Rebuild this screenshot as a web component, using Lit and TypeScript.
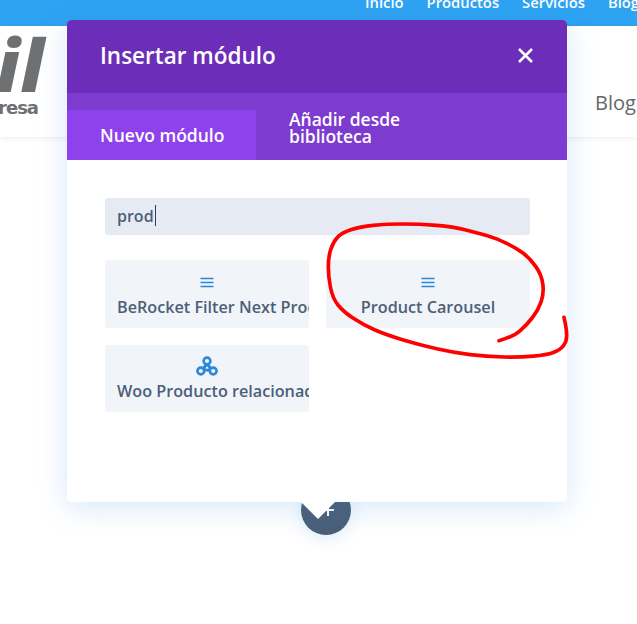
import { LitElement, css, html, svg } from "lit";
import { customElement } from "lit/decorators.js";

const FONT = css`"Open Sans", "Noto Sans", sans-serif`;

// hand drawn circle, in 3x crop coordinates
const SCRIBBLE = [
  [537, 392], [580, 380], [620, 345], [655, 300], [672, 250], [665, 195], [630, 145], [590, 115],
  [530, 85], [470, 68], [400, 50], [300, 42], [200, 42], [120, 50], [65, 68], [40, 95], [25, 140],
  [25, 200], [38, 265], [70, 305], [130, 345], [200, 375], [300, 405], [400, 428], [500, 440],
  [600, 442], [680, 435], [720, 420], [740, 395], [740, 360], [732, 322],
];

function smoothPath(points: number[][]) {
  let d = `M${points[0][0]} ${points[0][1]}`;
  for (let i = 1; i < points.length - 1; i++) {
    const mx = (points[i][0] + points[i + 1][0]) / 2;
    const my = (points[i][1] + points[i + 1][1]) / 2;
    d += ` Q${points[i][0]} ${points[i][1]} ${mx} ${my}`;
  }
  const last = points[points.length - 1];
  return d + ` L${last[0]} ${last[1]}`;
}

const menuIcon = svg`<svg class="icon" width="14" height="14" viewBox="0 0 14 14">
  <path d="M0.500 3.500H13.500M0.500 7.500H13.500M0.500 11.500H13.500" stroke="#2b87da" stroke-width="1.300" fill="none"/>
</svg>`;

const spinnerIcon = svg`<svg class="icon" width="22" height="22" viewBox="0 0 22 22">
  <g fill="none" stroke="#2b87da" stroke-width="2.600">
    <path d="M11 9L6 15M11 9L16 15M6 15H16" stroke-width="3"/>
    <circle cx="11" cy="6" r="3.400" fill="#f1f4f9"/>
    <circle cx="4.800" cy="16" r="3.400" fill="#f1f4f9"/>
    <circle cx="17.200" cy="16" r="3.400" fill="#f1f4f9"/>
    <circle cx="11" cy="13" r="0.800" fill="#f1f4f9" stroke="none"/>
  </g>
</svg>`;

@customElement("app-root")
export class AppRoot extends LitElement {
  static styles = css`
    :host {
      display: block;
      position: relative;
      height: 624px;
      overflow: hidden;
      background: #fff;
      font-family: ${FONT};
    }
    .topbar {
      height: 26px;
      overflow: hidden;
      background: #2ea3f2;
    }
    .topnav {
      display: flex;
      gap: 23px;
      margin-top: -8px;
      padding-left: 365px;
      color: #fff;
      font-size: 14.800px;
      font-weight: 600;
      line-height: 20px;
      white-space: nowrap;
    }
    .header {
      display: flex;
      justify-content: space-between;
      align-items: flex-start;
      height: 111px;
      overflow: hidden;
      background: #fff;
      box-shadow: 0 1px 6px rgba(0, 0, 0, 0.08);
      position: relative;
    }
    .logo {
      display: flex;
      flex-direction: column;
      align-items: flex-end;
      width: 45px;
      padding: 9px 5px 0 0;
      overflow: hidden;
      color: #6f7072;
      font-weight: 800;
    }
    .logo-main {
      font-size: 72px;
      font-style: italic;
      line-height: 58px;
      letter-spacing: 1px;
      white-space: nowrap;
    }
    .logo-sub {
      margin-top: 6px;
      margin-right: 7px;
      font-family: "DejaVu Sans", sans-serif;
      font-weight: 700;
      font-size: 18px;
      line-height: 18px;
      letter-spacing: -1px;
      white-space: nowrap;
    }
    .menu-last {
      padding-top: 63px;
      width: 42px;
      overflow: hidden;
      color: #666;
      font-size: 20px;
      line-height: 28px;
      white-space: nowrap;
    }
    .fab-row {
      padding: 348px 0 0 301px;
    }
    .fab {
      display: flex;
      align-items: center;
      justify-content: center;
      width: 50px;
      height: 50px;
      border-radius: 50%;
      background: #4c5f78;
      box-shadow: 0 4px 16px rgba(43, 135, 218, 0.15);
    }
    .fab svg {
      margin-left: 3px;
    }
    .modal {
      position: absolute;
      left: 67px;
      top: 20px;
      width: 500px;
      height: 482px;
      border-radius: 4px;
      background: #fff;
      box-shadow: 0 5px 30px rgba(43, 135, 218, 0.2);
    }
    .modal::after {
      content: "";
      position: absolute;
      left: 234px;
      top: 100%;
      border-style: solid;
      border-width: 17px 17px 0;
      border-color: #fff transparent transparent;
    }
    .modal-head {
      display: flex;
      align-items: center;
      justify-content: space-between;
      height: 73px;
      padding: 0 33px 2px 33px;
      box-sizing: border-box;
      border-radius: 4px 4px 0 0;
      background: #6c2eb9;
      color: #fff;
      font-size: 22.500px;
      font-weight: 600;
    }
    .close {
      display: block;
    }
    .tabs {
      display: flex;
      align-items: flex-end;
      height: 67px;
      background: #7d3bcf;
      color: #fff;
      font-size: 17.500px;
      font-weight: 600;
      line-height: 17px;
    }
    .tab {
      display: flex;
      align-items: center;
      height: 50px;
      padding: 0 33px;
      white-space: nowrap;
    }
    .tab.active {
      width: 189px;
      box-sizing: border-box;
      background: #8f42ec;
    }
    .tab.next {
      width: 190px;
      box-sizing: border-box;
      padding: 0 0 15px 33px;
      height: 67px;
      align-items: flex-end;
    }
    .body {
      padding: 38px 37px 0 38px;
    }
    .search {
      display: flex;
      align-items: center;
      height: 37px;
      padding: 0 12px 2px;
      box-sizing: border-box;
      border-radius: 3px;
      background: #e6ebf3;
      color: #4c5f78;
      font-size: 16px;
      font-weight: 600;
    }
    .caret {
      width: 1px;
      height: 21px;
      margin-left: 1px;
      background: #33404f;
    }
    .grid {
      display: grid;
      grid-template-columns: 204px 204px;
      grid-auto-rows: 67.5px;
      gap: 17px;
      margin-top: 25px;
    }
    .card {
      display: flex;
      flex-direction: column;
      align-items: stretch;
      overflow: hidden;
      padding: 11px 12px 0;
      box-sizing: border-box;
      border-radius: 3px;
      background: #f1f4f9;
      color: #4c5f78;
      font-size: 16.200px;
      font-weight: 600;
    }
    .card.tall {
      padding-top: 10px;
    }
    .card-icon {
      display: flex;
      justify-content: center;
      align-items: center;
      height: 22px;
      padding-right: 1px;
    }
    .card-label {
      margin-top: 3px;
      line-height: 22px;
      text-align: center;
      white-space: nowrap;
    }
    .scribble {
      position: absolute;
      left: 320px;
      top: 210px;
      overflow: visible;
      pointer-events: none;
    }
  `;

  render() {
    return html`
      <div class="topbar">
        <div class="topnav">
          <span>Inicio</span><span>Productos</span><span>Servicios</span><span>Blog</span>
        </div>
      </div>
      <div class="header">
        <div class="logo">
          <span class="logo-main">til</span>
          <span class="logo-sub">resa</span>
        </div>
        <div class="menu-last">Blog</div>
      </div>
      <div class="fab-row">
        <div class="fab">
          <svg width="14" height="14" viewBox="0 0 14 14">
            <path d="M7 1V13M1 7H13" stroke="#fff" stroke-width="2" fill="none"/>
          </svg>
        </div>
      </div>

      <div class="modal">
        <div class="modal-head">
          <span>Insertar módulo</span>
          <svg class="close" width="17" height="17" viewBox="0 0 17 17">
            <path d="M2 2L15 15M15 2L2 15" stroke="#fff" stroke-width="2.500" fill="none"/>
          </svg>
        </div>
        <div class="tabs">
          <div class="tab active">Nuevo módulo</div>
          <div class="tab next"><span>Añadir desde<br />biblioteca</span></div>
        </div>
        <div class="body">
          <div class="search"><span>prod</span><span class="caret"></span></div>
          <div class="grid">
            <div class="card">
              <div class="card-icon">${menuIcon}</div>
              <div class="card-label">BeRocket Filter Next Product</div>
            </div>
            <div class="card">
              <div class="card-icon">${menuIcon}</div>
              <div class="card-label">Product Carousel</div>
            </div>
            <div class="card tall">
              <div class="card-icon">${spinnerIcon}</div>
              <div class="card-label">Woo Producto relacionado</div>
            </div>
          </div>
        </div>
      </div>

      <svg class="scribble" width="257" height="160" viewBox="0 0 771 480">
        <path d=${smoothPath(SCRIBBLE)} fill="none" stroke="#f00" stroke-width="11" stroke-linecap="round" stroke-linejoin="round"/>
      </svg>
    `;
  }
}
